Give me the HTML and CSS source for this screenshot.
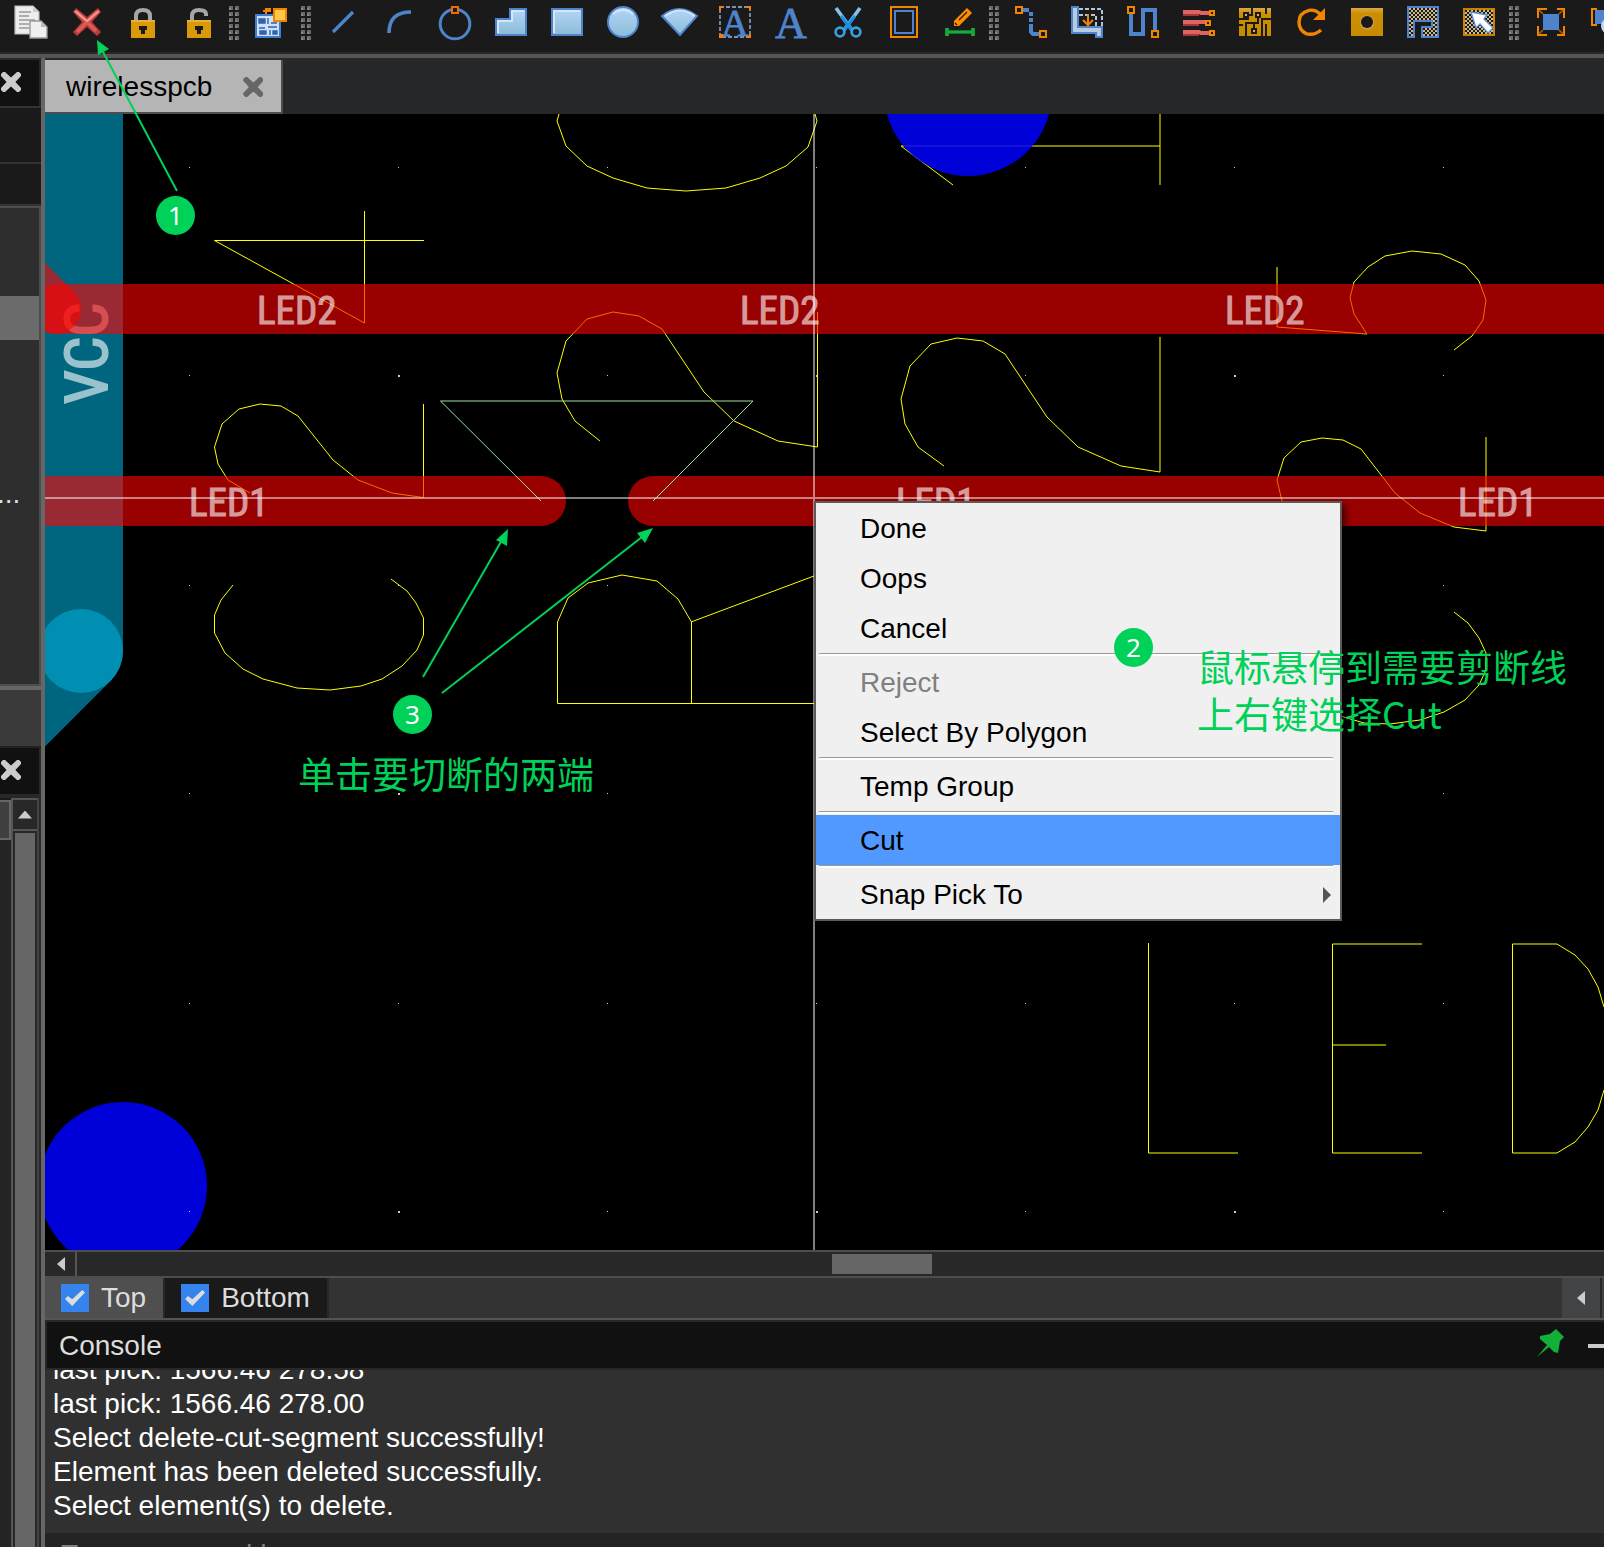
FILE: index.html
```html
<!DOCTYPE html>
<html lang="zh-CN">
<head>
  <meta charset="UTF-8" />
  <meta name="viewport" content="width=device-width, initial-scale=1.0"/>
  <title>wirelesspcb</title>
  <link rel="stylesheet" href="styles.css">
</head>
<body>
  <svg class="defs" aria-hidden="true">
    <defs>
      <linearGradient id="sky" x1="0" y1="0" x2="0" y2="1"><stop offset="0" stop-color="#b4d5f7"/><stop offset="1" stop-color="#8bbcd8"/></linearGradient>
      <linearGradient id="gold" x1="0" y1="0" x2="0" y2="1"><stop offset="0" stop-color="#d9a94a"/><stop offset=".2" stop-color="#cc8f00"/><stop offset="1" stop-color="#c98a00"/></linearGradient>
      <pattern id="check" width="2" height="2" patternUnits="userSpaceOnUse"><rect width="2" height="2" fill="#1a1a1a"/><rect width="1" height="1" fill="#cdb988"/><rect x="1" y="1" width="1" height="1" fill="#cdb988"/></pattern>
      <pattern id="grip" width="6" height="6" patternUnits="userSpaceOnUse"><rect width="4" height="4" fill="#6a6a6a"/><rect y="2" width="2" height="2" fill="#888"/></pattern>
      <pattern id="dots" x="398" y="375" width="418" height="418" patternUnits="userSpaceOnUse">
        <rect width="2" height="2" fill="#ccc"/><rect x="209" width="1" height="1" fill="#ccc"/>
        <rect y="210" width="1" height="1" fill="#ccc"/><rect x="209" y="210" width="1" height="1" fill="#ccc"/>
      </pattern>
    </defs>
  </svg>

  <div class="app">
    <div class="toolbar" role="toolbar" aria-label="Tools">
      <button aria-label="Copy"><svg viewBox="0 0 16 16"><path d="M0 0H9L12 3V14H0Z" fill="#eee" stroke="#bbb" stroke-width=".6"/><path d="M9 0V3H12" fill="#ccc"/><path d="M2 3H8M2 5H7M2 7H10M2 9H7M2 11H7" stroke="#999" stroke-width=".7"/><path d="M7.5 7.5H13L16 10.500V16H7.500Z" fill="#f0f0f0" stroke="#999" stroke-width=".7"/><path d="M13 7.500V10.500H16" fill="#bbb"/></svg></button>
      <button aria-label="Delete"><svg viewBox="0 0 16 16"><path d="M2.500 1L8 5.500L13.500 1L15 3L10.500 8L15 13L13 15L8 10.500L3 15L1 13L5.500 8L1 3Z" fill="#b93a36"/><path d="M2.500 2.500L12.500 12.500M13.500 2.500L3 13" stroke="#dd5a55" stroke-width="1.800"/><path d="M2 2.500L8 7.500L14 2.500" fill="none" stroke="#ee9a96"/></svg></button>
      <button aria-label="Lock"><svg viewBox="0 0 16 16"><path d="M4.500 8V5Q4.500 2 8 2T11.500 5V8" fill="none" stroke="#a5a5a5" stroke-width="2"/><rect x="2" y="7" width="12" height="9" fill="#d89a08"/><path d="M2 7.500H14" stroke="#eab13a"/><path d="M6 10H10V12H9V14H7V12H6Z" fill="#1a1a1a"/></svg></button>
      <button aria-label="Unlock"><svg viewBox="0 0 16 16"><path d="M4.500 8V5Q4.500 2 8 2T11.500 4V5" fill="none" stroke="#a5a5a5" stroke-width="2"/><rect x="2" y="7" width="12" height="9" fill="#d89a08"/><path d="M2 7.500H14" stroke="#eab13a"/><path d="M6 10H10V12H9V14H7V12H6Z" fill="#1a1a1a"/></svg></button>
      <svg class="grip"><rect width="10" height="34" fill="url(#grip)"/></svg>
      <button aria-label="Place part"><svg viewBox="0 0 16 16"><rect x=".5" y="4.500" width="12" height="11" fill="#cfe0fa" stroke="#3f7bd0"/><path d="M2 6.500H5V8.500H2ZM6.500 6V9M8 8.500H11M2 11H5M6.500 10.500H11M2.500 12.500H5.500V14H2.500ZM7.500 12V14.500M9 12.500H11V14H9Z" stroke="#2f62ae" fill="#2f62ae" stroke-width=".7"/><path d="M5.500 4V1.500H8M4 2.500H8" stroke="#f28500" fill="none"/><rect x="9.500" y="1.500" width="6" height="6" fill="#ffc84a" stroke="#f28500"/></svg></button>
      <svg class="grip"><rect width="10" height="34" fill="url(#grip)"/></svg>
      <button aria-label="Line"><svg viewBox="0 0 16 16"><path d="M3 13L13 3" stroke="#4f83cc" stroke-width="1.600"/></svg></button>
      <button aria-label="Arc"><svg viewBox="0 0 16 16"><path d="M3 13.500Q3 3 14 3" fill="none" stroke="#4f83cc" stroke-width="1.800"/></svg></button>
      <button aria-label="Circle"><svg viewBox="0 0 16 16"><circle cx="8" cy="9" r="7.400" fill="none" stroke="#4f83cc" stroke-width="1.500"/><rect x="6.500" y=".5" width="3" height="3" fill="#1a1a1a" stroke="#f26a00"/></svg></button>
      <button aria-label="Polygon shape"><svg viewBox="0 0 16 16"><path d="M.5 6.500H7.500V1.500H15.500V14.500H.5Z" fill="url(#sky)" stroke="#4f83cc"/><path d="M1.500 13.500V7.500H8.500V2.500H14.500" fill="none" stroke="#d5e6fa"/></svg></button>
      <button aria-label="Rectangle"><svg viewBox="0 0 16 16"><rect x=".5" y="1.500" width="15" height="13" fill="url(#sky)" stroke="#4f83cc"/><path d="M1.500 13.500V2.500H14.500" fill="none" stroke="#d5e6fa"/></svg></button>
      <button aria-label="Filled circle"><svg viewBox="0 0 16 16"><circle cx="8" cy="8" r="7.500" fill="url(#sky)" stroke="#4f83cc"/><path d="M3 4Q8 0 13 4" fill="none" stroke="#d5e6fa"/></svg></button>
      <button aria-label="Sector"><svg viewBox="0 0 16 16"><path d="M-.5 5Q8 -2 17 5L8.500 14.500Z" fill="url(#sky)" stroke="#4f83cc"/><path d="M1 5Q8.500 -.5 16 5" fill="none" stroke="#d5e6fa"/></svg></button>
      <button aria-label="Text frame"><svg viewBox="0 0 16 16"><rect x=".5" y=".5" width="15" height="15" fill="none" stroke="#8093ab" stroke-width=".9" stroke-dasharray="2 1"/><text class="glyph" x="8" y="15" font-size="19" text-anchor="middle">A</text><path d="M0 2V0H2V1H1V2ZM14 0H16V2H15V1H14ZM0 14H2V16H0ZM14 16V15H15V14H16V16Z" fill="#ff7a00"/></svg></button>
      <button aria-label="Text"><svg viewBox="0 0 16 16"><text class="glyph" x="8" y="16" font-size="22" text-anchor="middle">A</text></svg></button>
      <button aria-label="Cut"><svg viewBox="0 0 16 16"><path d="M2.500 1L10.500 12M14.500 1L6.500 12" stroke="#7fc4ee" stroke-width="1.800"/><path d="M5 5L10.500 12M12 5L6.500 12" stroke="#1e8fe0" stroke-width="1.600"/><circle cx="4.500" cy="13" r="2.200" fill="none" stroke="#3aa0e0" stroke-width="1.300"/><circle cx="12.500" cy="13" r="2.200" fill="none" stroke="#3aa0e0" stroke-width="1.300"/></svg></button>
      <button aria-label="Board outline"><svg viewBox="0 0 16 16"><rect x="2" y=".5" width="13" height="15" fill="none" stroke="#f28500"/><rect x="4" y="2.500" width="9" height="11" fill="none" stroke="#4f83cc"/></svg></button>
      <button aria-label="Dimension"><svg viewBox="0 0 16 16"><path d="M5.500 10V7.500L12 1L14.500 3.500L8 10Z" fill="#ff8c00"/><path d="M8 7L12 3M6 8.500L7 9.500" stroke="#1a1a1a" stroke-width=".6"/><path d="M2 11V15M15 11V15" stroke="#12b03a" stroke-width="1.800"/><path d="M2 13H15" stroke="#12b03a" stroke-width="1.600"/></svg></button>
      <svg class="grip"><rect width="10" height="34" fill="url(#grip)"/></svg>
      <button aria-label="Route"><svg viewBox="0 0 16 16"><path d="M4 2H7" stroke="#4f83cc" stroke-width="2"/><path d="M8 3V10" stroke="#4f83cc" stroke-width="2" stroke-dasharray="2 1"/><path d="M8 9V13L9 14H12" fill="none" stroke="#4f83cc" stroke-width="2"/><rect x=".5" y=".5" width="3" height="3" fill="#1a1a1a" stroke="#f28500"/><rect x="12.500" y="12.500" width="3" height="3" fill="#1a1a1a" stroke="#f28500"/></svg></button>
      <button aria-label="Push trace"><svg viewBox="0 0 16 16"><path d="M.5 .5H3.500V10.500H15.500V15.500H12.500V13.500H.5Z" fill="#b6cbe0" stroke="#4f83cc"/><path d="M4 1.500H15.500V10M4 4.500H12.500V10" fill="none" stroke="#b0c6df" stroke-dasharray="2 1"/><path d="M8.500 4V9M6 7L8.500 9.500L11 7" fill="none" stroke="#f28500"/></svg></button>
      <button aria-label="Tune length"><svg viewBox="0 0 16 16"><path d="M2 4V14H8V2H14V12" fill="none" stroke="#4f83cc" stroke-width="2"/><rect x=".5" y=".5" width="3" height="3" fill="#1a1a1a" stroke="#f28500"/><rect x="12.500" y="12.500" width="3" height="3" fill="#1a1a1a" stroke="#f28500"/></svg></button>
      <button aria-label="Bus"><svg viewBox="0 0 16 16"><path d="M0 3H8L9 3.500H13M0 8H11M0 13H8L9 13.500H13" fill="none" stroke="#e06464" stroke-width="2"/><path d="M0 4.500H8M0 9.500H8M0 14.500H8" stroke="#a83535"/><g fill="#1a1a1a" stroke="#f28500"><rect x="13.500" y="2.500" width="2" height="2"/><rect x="11.500" y="7.500" width="2" height="2"/><rect x="13.500" y="12.500" width="2" height="2"/></g></svg></button>
      <button aria-label="Copper maze"><svg viewBox="0 0 16 16"><rect y="1" width="16" height="14" fill="url(#gold)"/><path d="M0 6.500H5M6.500 1V4.500H4M9.500 5V8.500H3.500V12M0 9.500H2M13.500 1V4M11 6.500H16M11.500 7V15M13.500 9V15M7.500 12V9M3.500 15V12" fill="none" stroke="#1a1a1a"/><path d="M2 3H5V6H2ZM8 3H11V6H8ZM6 11H9V14H6Z" fill="#1a1a1a"/><path d="M3 4H4V5H3ZM9 4H10V5H9ZM7 12H8V13H7Z" fill="#e8b040"/></svg></button>
      <button aria-label="Redo"><svg viewBox="0 0 16 16"><path d="M12.500 4Q10 1.500 7 2.200Q2 3.500 2 8Q2 12 5.500 13.800Q9.500 15 13 12" fill="none" stroke="#f28500" stroke-width="1.700"/><path d="M15 1V7H9Z" fill="#f28500"/></svg></button>
      <button aria-label="Via"><svg viewBox="0 0 16 16"><rect y="1" width="16" height="14" fill="url(#gold)"/><circle cx="8" cy="8.200" r="3.700" fill="#c89a45"/><circle cx="8" cy="8" r="3" fill="#1a1a1a"/></svg></button>
      <button aria-label="Copper area"><svg viewBox="0 0 16 16"><path d="M.5 .5H15.500V15.500H7.500V10.500H12.500V7.500H3.500V15.500H.5Z" fill="url(#check)" stroke="#4f83cc"/></svg></button>
      <button aria-label="Select area"><svg viewBox="0 0 16 16"><rect x=".5" y="1.500" width="15" height="13" fill="url(#check)" stroke="#cc8000"/><path d="M4 3L12 4.500L10.500 6.500L15 11L12.500 13.500L8.500 9L6.500 11Z" fill="#fff" stroke="#5b8fd8" stroke-width=".7"/></svg></button>
      <svg class="grip"><rect width="10" height="34" fill="url(#grip)"/></svg>
      <button aria-label="Zoom to fit"><svg viewBox="0 0 16 16"><rect x="4" y="4" width="8" height="8" fill="#4f83cc"/><path d="M1.500 6V1.500H6M11 1.500H14.500V6M14.500 10V14.500H11M6 14.500H1.500V10" fill="none" stroke="#f28500"/><path d="M2 2L4 4M14 2L12 4M2 14L4 12M14 14L12 12" stroke="#a86000" stroke-width=".8"/></svg></button>
      <button aria-label="Zoom to selection"><svg viewBox="0 0 16 16"><path d="M3 1.500H.5V9.500H3M12 1.500H14.500V6" fill="none" stroke="#f28500"/><rect x="2" y="2" width="9" height="7" fill="#4f83cc"/><circle cx="9" cy="10" r="4" fill="#bcd8f4"/></svg></button>
    </div>

    <div class="workspace">
      <div class="side">
        <div class="side-head"><button class="close" aria-label="Close panel"></button></div>
        <div class="side-row"></div>
        <div class="side-row short"></div>
        <div class="side-list"><div class="selected"></div><span>...</span></div>
        <div class="side-gap"></div>
        <div class="side-head"><button class="close" aria-label="Close panel"></button></div>
        <div class="side-tree">
          <div class="tree-col"><div class="tree-head"></div></div>
          <div class="vscroll">
            <button aria-label="Scroll up"></button>
            <div class="thumb"></div>
          </div>
        </div>
      </div>

      <div class="main">
        <div class="tabs">
          <div class="tab"><span>wirelesspcb</span><button class="close" aria-label="Close tab"></button></div>
        </div>

        <div class="board">
          <svg class="layers" role="img" aria-label="Board layout">
            <g transform="translate(-45 -114)">
              <path class="teal" d="M45 100H123V651A42 42 0 0 1 110.700 680.700L45 746.400Z"/>
              <circle cx="81" cy="651" r="42" fill="#008fb3"/>
              <text class="net big" transform="translate(107 404) rotate(-90)">VCC</text>

              <g class="silk">
                <path d="M424 240.500H214.500L364.500 323V211"/>
                <path d="M250 493L228 480L218 464L214.500 447L222 424L239 409L260 404L281 406L298 416L333 460L358 480L392 493L423.500 497.500V404"/>
                <path d="M233 585L221 600L214.500 615V633L225 653L243 669L263 679L297 688L330 690L361 686L382 679L402 666L417 650L423.500 635V618L416 603L407 591L391 579"/>
                <path d="M559 114L557 121L566 146L587 166L613 178L647 188L686 191L726 188L760 178L786 166L808 147L817 121L815 114"/>
                <path d="M600 441L575 421L562 399L557 373L566 341L587 319L613 312L639 316L662 329L704 392L734 421L778 441L817.500 447V312"/>
                <path d="M944 466L918 447L905 424L901 399L910 366L931 344L957 338L983 341L1005 354L1047 417L1078 447L1121 466L1160 472V337"/>
                <path d="M1160 114V185M1160 146H901L953 185"/>
                <path d="M830 703.500H557.500V622L568 598L588 583L622 575L657 581L678 599L691.500 622V703M691 622L830 570"/>
                <path d="M1277 267V327L1367 334L1354 314L1350 298L1354 282L1368 267L1385 256L1412 251L1441 254L1465 265L1479 281L1486 300L1483 320L1472 336L1454 350"/>
                <path d="M1290 520L1282 501L1277 480L1284 458L1301 442L1322 438L1343 440L1361 449L1395 493L1420 513L1454 527L1486 531V437"/>
                <path d="M1454 612L1468 623L1479 638L1486 653V670L1479 685L1465 700L1444 712L1420 720L1390 724L1364 723L1330 713"/>
                <path d="M1148.500 943V1153H1238"/>
                <path d="M1422 944H1332.500V1153H1422M1332 1045H1386"/>
                <path d="M1604 1007L1598 987L1588 969L1575 955L1557 944H1512.500V1153H1557L1575 1142L1588 1127L1598 1110L1604 1090"/>
              </g>

              <circle class="pad" cx="968" cy="92" r="84"/>
              <circle class="pad" cx="123" cy="1186" r="84"/>

              <g class="track">
                <path d="M56 309H4000"/>
                <path d="M56 309L0 253"/>
                <path d="M0 501H541"/>
                <path d="M653 501H4000"/>
              </g>

              <text class="net" x="257" y="324">LED2</text>
              <text class="net" x="740" y="324">LED2</text>
              <text class="net" x="1225" y="324">LED2</text>
              <text class="net" x="189" y="516">LED1</text>
              <text class="net" x="896" y="516">LED1</text>
              <text class="net" x="1458" y="516">LED1</text>

              <path class="preview" d="M541 501L440.500 401H753L653 501"/>
              <rect x="45" y="114" width="100%" height="100%" fill="url(#dots)"/>
              <path class="cross" d="M814 0V4000M0 498H4000"/>
            </g>
          </svg>

          <ul class="menu">
            <li><button>Done</button></li>
            <li><button>Oops</button></li>
            <li><button>Cancel</button></li>
            <li class="sep"></li>
            <li><button disabled>Reject</button></li>
            <li><button>Select By Polygon</button></li>
            <li class="sep"></li>
            <li><button>Temp Group</button></li>
            <li class="sep"></li>
            <li><button class="active">Cut</button></li>
            <li class="sep"></li>
            <li><button class="more">Snap Pick To</button></li>
          </ul>
        </div>

        <div class="hscroll">
          <button aria-label="Scroll left"></button>
          <div class="track-area"><div class="thumb"></div></div>
        </div>

        <div class="layer-tabs">
          <label class="layer current"><input type="checkbox" checked>Top</label>
          <label class="layer"><input type="checkbox" checked>Bottom</label>
          <button class="nav" aria-label="Previous layers"></button>
          <div class="nav-next"></div>
        </div>

        <div class="console-head">
          <span>Console</span>
          <button aria-label="Pin"><svg width="28" height="28" viewBox="0 0 28 28"><path d="M20 0L28 8L24 12L22 24L18 23L13 18L1 28L11 16L4 10V7L14 5Z" fill="#12b03a"/></svg></button>
          <button class="minimize" aria-label="Minimize"></button>
        </div>
        <div class="log">
          <p>last pick: 1566.46 278.58</p>
          <p>last pick: 1566.46 278.00</p>
          <p>Select delete-cut-segment successfully!</p>
          <p>Element has been deleted successfully.</p>
          <p>Select element(s) to delete.</p>
        </div>
        <div class="command"><input type="text" aria-label="Command" placeholder="Type command here"></div>
      </div>
    </div>

    <div class="notes">
      <svg>
        <g stroke="#00d158" stroke-width="2"><path d="M177 191L102 50M423 677L502 540M442 693L642 537"/></g>
        <g fill="#00d158"><path d="M97 40L109 49L98 55ZM508 529L507 546L496 540ZM653 528L645 543L637 533Z"/></g>
      </svg>
      <span class="badge one">1</span>
      <span class="badge two">2</span>
      <span class="badge three">3</span>
      <p class="note hover">鼠标悬停到需要剪断线<br>上右键选择Cut</p>
      <p class="note ends">单击要切断的两端</p>
    </div>
  </div>
</body>
</html>
```
FILE: styles.css
```css
:root {
  --text: #ddd;
  --line: #555;
  --dark: #1a1a1a;
  --head: #111;
  --green: #00d158;
}

* {
  box-sizing: border-box;
}

body {
  margin: 0;
  background: #fffef8;
  font-family: "Liberation Sans", Arial, sans-serif;
  font-size: 28px;
  color: var(--text);
}

button, input {
  font: inherit;
  color: inherit;
}

button {
  display: block;
  padding: 0;
  border: none;
  background: none;
}

p {
  margin: 0;
}

.defs {
  position: absolute;
  width: 0;
  height: 0;
}

.app {
  position: relative;
  display: flex;
  flex-direction: column;
  height: calc(100vh - 2px);
  background: #282828;
  overflow: hidden;
}

/* toolbar */
.toolbar {
  display: flex;
  flex-shrink: 0;
  height: 58px;
  padding: 6px 0 0 3px;
  background: var(--dark);
  border-bottom: 4px solid var(--line);
  box-shadow: inset 0 -2px #282828;
  overflow: hidden;
}

.toolbar button {
  flex: 0 0 56px;
  height: 32px;
  padding: 0 12px;
}

.toolbar button svg {
  display: block;
  width: 32px;
  height: 32px;
  overflow: visible;
}

.toolbar .grip {
  flex: 0 0 10px;
  height: 34px;
  margin: 0 4px 0 2px;
}

.glyph {
  font-family: "Liberation Serif", serif;
  fill: #4f83cc;
  stroke: #4f83cc;
  stroke-width: .4;
}

.workspace {
  display: flex;
  flex: 1;
  min-height: 0;
}

/* left dock */
.side {
  display: flex;
  flex-direction: column;
  flex: 0 0 45px;
  padding-top: 2px;
  border-right: 4px solid #666;
  background: #282828;
}

.side-head {
  flex: 0 0 46px;
  margin-right: 2px;
  padding: 12px 0 0 1px;
  background: var(--head);
}

.close {
  width: 20px;
  height: 20px;
  background: #ccc;
  clip-path: polygon(0 20%, 0 10%, 10% 0, 20% 0, 50% 28%, 80% 0, 90% 0, 100% 10%, 100% 20%, 72% 50%, 100% 80%, 100% 90%, 90% 100%, 80% 100%, 50% 72%, 20% 100%, 10% 100%, 0 90%, 0 80%, 28% 50%);
}

.side-row {
  flex: 0 0 56px;
  background: var(--dark);
  border-top: 2px solid #333;
}

.side-row.short {
  flex-basis: 44px;
  border-bottom: 2px solid #333;
}

.side-list {
  flex: 0 0 480px;
  padding-top: 88px;
  background: #2e2e2e;
  border: 2px solid #4d4d4d;
  border-left: none;
}

.side-list .selected {
  height: 44px;
  margin-bottom: 138px;
  background: #6b6b6b;
}

.side-list span {
  display: block;
  margin-left: -3px;
  line-height: 32px;
}

.side-gap {
  flex: 0 0 62px;
  background: #3a3a3a;
  border-top: 4px solid #666;
  border-bottom: 2px solid #222;
}

.side-tree {
  display: flex;
  flex: 1;
  margin: 4px 2px 0 0;
}

.tree-col {
  flex: 1;
  background: #242424;
  border-top: 2px solid var(--dark);
}

.tree-head {
  height: 40px;
  background: #3e4042;
  border: 2px solid #666;
  border-left: none;
}

.vscroll {
  display: flex;
  flex-direction: column;
  width: 28px;
  border-left: 2px solid var(--line);
  border-right: 2px solid #444;
}

.vscroll button {
  flex: 0 0 33px;
  border: 2px solid var(--line);
  border-left: none;
  border-right: none;
}

.vscroll button::before {
  content: "";
  display: block;
  width: 14px;
  height: 8px;
  margin: 0 auto;
  background: #ccc;
  clip-path: polygon(50% 0, 100% 100%, 0 100%);
}

.vscroll .thumb {
  flex: 1;
  margin: 2px 2px 0;
  background: #666;
}

/* editor */
.main {
  display: flex;
  flex-direction: column;
  flex: 1;
  min-width: 0;
}

.tabs {
  display: flex;
  flex: 0 0 56px;
  padding-top: 2px;
  background: #262729;
}

.tab {
  display: flex;
  align-items: center;
  gap: 31px;
  padding: 2px 18px 0 21px;
  background: #b5b5b5;
  color: #000;
  border: 2px solid #4d4d4d;
  border-width: 0 2px 2px 0;
}

.tab .close {
  background: #666;
}

.board {
  position: relative;
  flex: 1;
  min-height: 0;
  background: #000;
  overflow: hidden;
}

.layers {
  display: block;
  width: 100%;
  height: 100%;
}

.teal {
  fill: #006680;
}

.silk path {
  fill: none;
  stroke: #ff0;
  stroke-width: 1;
}

.pad {
  fill: #00f;
  opacity: .85;
}

.track path {
  fill: none;
  stroke: #f00;
  stroke-width: 50;
  stroke-linecap: round;
  opacity: .6;
}

.net {
  font-family: "Liberation Sans Narrow", "Roboto Condensed", "Liberation Sans", sans-serif;
  font-size: 39px;
  fill: #fff;
  stroke: #fff;
  stroke-width: 1;
  opacity: .6;
}

.net.big {
  font-size: 60px;
  stroke-width: 2;
}

.preview {
  fill: none;
  stroke: #9fdf9f;
}

.cross {
  stroke: #fff;
  stroke-width: 2;
  opacity: .5;
}

/* context menu */
.menu {
  position: absolute;
  left: 769px;
  top: 387px;
  width: 528px;
  margin: 0;
  padding: 0;
  list-style: none;
  background: #f0f0f0;
  border: 2px solid #5a5a5a;
  box-shadow: 4px 4px 6px rgba(0, 0, 0, .5);
}

.menu button {
  width: 100%;
  height: 50px;
  padding: 2px 0 0 44px;
  color: #000;
  text-align: left;
}

.menu button:disabled {
  color: #808080;
}

.menu .active {
  background: #5299ff;
}

.menu .more {
  display: flex;
  align-items: center;
  justify-content: space-between;
  padding-right: 9px;
}

.menu .more::after {
  content: "";
  width: 8px;
  height: 16px;
  background: #555;
  clip-path: polygon(0 0, 100% 50%, 0 100%);
}

.menu .sep {
  height: 3px;
  margin: 0 7px 1px 3px;
  background: #fff;
  border-top: 1px solid #999;
}

/* scroll bar and layer tabs */
.hscroll {
  display: flex;
  flex: 0 0 28px;
  padding-left: 2px;
  background: #282828;
  border: 2px solid #4d4d4d;
  border-width: 2px 0;
}

.hscroll button {
  width: 30px;
  border-right: 2px solid var(--line);
}

.hscroll button::before,
.nav::before {
  content: "";
  display: block;
  width: 8px;
  height: 14px;
  margin: 0 auto;
  background: #ccc;
  clip-path: polygon(100% 0, 100% 100%, 0 50%);
}

.track-area {
  flex: 1;
  padding: 2px 0;
}

.track-area .thumb {
  width: 100px;
  height: 20px;
  margin-left: 755px;
  background: #666;
}

.layer-tabs {
  display: flex;
  flex: 0 0 42px;
  background: #333;
  border-bottom: 2px solid var(--line);
}

.layer {
  display: flex;
  align-items: center;
  gap: 12px;
  padding: 0 17px 0 16px;
  background: var(--dark);
  border-right: 2px solid #282828;
}

.layer.current {
  background: #4f4f4f;
}

.layer input {
  appearance: none;
  width: 28px;
  height: 28px;
  margin: 0;
  padding: 6px 4px;
  background: #3584ee;
}

.layer input:checked::before {
  content: "";
  display: block;
  width: 20px;
  height: 16px;
  background: #ddd;
  clip-path: polygon(0 56%, 14% 38%, 36% 58%, 86% 0, 100% 16%, 36% 100%);
}

.nav {
  width: 40px;
  margin-left: auto;
  background: #424345;
  border-right: 2px solid #282828;
}

.nav-next {
  width: 2px;
  background: #424345;
}

/* console */
.console-head {
  display: flex;
  align-items: center;
  flex: 0 0 50px;
  margin-left: 2px;
  padding: 2px 0 0 12px;
  background: var(--head);
  border: 2px solid #282828;
  border-width: 2px 0;
}

.console-head span {
  flex: 1;
}

.console-head .minimize {
  width: 16px;
  height: 4px;
  margin-left: 24px;
  background: #ccc;
}

.log {
  display: flex;
  flex-direction: column;
  justify-content: flex-end;
  flex: 0 0 163px;
  padding: 0 8px 10px;
  background: #303030;
  color: #fff;
  line-height: 34px;
  overflow: hidden;
}

.command {
  flex: 0 0 14px;
  background: #242424;
  overflow: hidden;
}

.command input {
  display: block;
  width: 100%;
  height: 44px;
  padding: 0 16px;
  border: none;
  background: none;
}

.command input::placeholder {
  color: #808080;
  opacity: 1;
}

/* tutorial marks over the editor */
.notes {
  position: absolute;
  inset: 0;
  pointer-events: none;
  color: var(--green);
}

.notes svg {
  width: 100%;
  height: 100%;
}

.badge {
  position: absolute;
  width: 39px;
  height: 39px;
  border-radius: 50%;
  background: var(--green);
  color: #fff;
  font-family: "Noto Sans", sans-serif;
  font-size: 26px;
  line-height: 38px;
  text-align: center;
}

.badge.one {
  left: 156px;
  top: 196px;
}

.badge.two {
  left: 1114px;
  top: 628px;
}

.badge.three {
  left: 393px;
  top: 695px;
}

.note {
  position: absolute;
  font-family: "Noto Sans CJK SC", sans-serif;
  font-size: 37px;
  line-height: 47px;
  white-space: nowrap;
}

.note.hover {
  left: 1197px;
  top: 643px;
}

.note.ends {
  left: 298px;
  top: 750px;
}
```
